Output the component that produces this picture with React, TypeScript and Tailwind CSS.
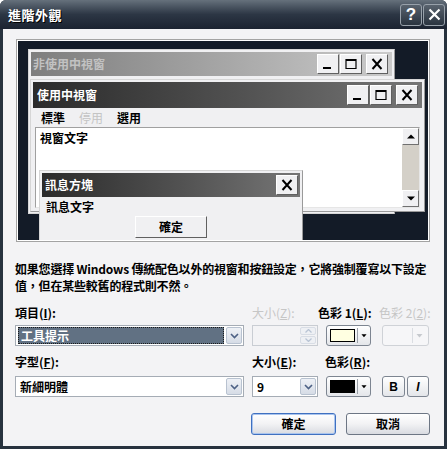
import React from "react";

const font = "font-['Noto_Sans_CJK_TC','Noto_Sans',sans-serif]";

// Classic caption buttons used by the preview windows
const CaptionButton = ({ kind }: { kind: "min" | "max" | "close" }) => (
  <div className="w-[22px] h-[20px] bg-[#f0f0f2] border border-t-white border-l-white border-b-[#606060] border-r-[#606060] flex items-center justify-center">
    <svg width="14" height="12" viewBox="0 0 14 12">
      {kind === "min" && <rect x="2" y="9" width="8" height="2" fill="#000" />}
      {kind === "max" && (
        <path d="M2 1.5h10v9H2z M2 1.5h10" fill="none" stroke="#000" strokeWidth="1.2" />
      )}
      {kind === "max" && <rect x="2" y="1" width="10" height="2" fill="#000" />}
      {kind === "close" && (
        <path d="M2.5 1 L11.5 11 M11.5 1 L2.5 11" stroke="#000" strokeWidth="2" />
      )}
    </svg>
  </div>
);

const DropArrow = () => (
  <div className="w-[16px] h-full bg-gradient-to-b from-[#eef1f6] to-[#d6dce6] border border-[#b8c2d0] rounded-[2px] flex items-center justify-center">
    <svg width="9" height="6" viewBox="0 0 9 6">
      <path d="M1 1 L4.5 4.5 L8 1" fill="none" stroke="#4d6185" strokeWidth="1.6" />
    </svg>
  </div>
);

const Combo = ({ text, selected, w }: { text: string; selected?: boolean; w: string }) => (
  <div className={`${w} h-[21px] border border-[#a5acb5] bg-white flex items-stretch p-[1px]`}>
    <div className="flex-1 flex items-center pl-[1px] pr-[2px]">
      <span
        className={`flex-1 h-full flex items-center px-[2px] text-[12px] font-semibold ${
          selected ? "bg-[#617183] text-white border border-dotted border-[#1a1a1a]" : "text-black"
        }`}
      >
        {text}
      </span>
    </div>
    <DropArrow />
  </div>
);

const ColorButton = ({ swatch }: { swatch: string }) => (
  <div className="w-[45px] h-[21px] rounded-[3px] border border-[#7d8591] bg-gradient-to-b from-white to-[#e4e6ea] flex items-center px-[3px] gap-[2px]">
    <div className={`w-[29px] h-[13px] border border-black ${swatch}`} />
    <div className="w-px h-[15px] bg-[#9aa0a8]" />
    <svg width="7" height="4" viewBox="0 0 7 4" className="ml-[1px]">
      <path d="M0.5 0 L6.5 0 L3.5 3.5 Z" fill="#000" />
    </svg>
  </div>
);

const XpButton = ({ label, w, def }: { label: string; w: string; def?: boolean }) => (
  <div
    className={`${w} h-[22px] rounded-[3px] border ${
      def ? "border-[#3f70c0] shadow-[inset_0_0_0_1px_#a9c4ee]" : "border-[#6d7684]"
    } bg-gradient-to-b from-white via-[#f2f2f4] to-[#d9dbe1] flex items-center justify-center text-[12px] font-bold text-black`}
  >
    {label}
  </div>
);

export default function App() {
  return (
    <div className={`${font} w-[447px] h-[449px] bg-[#27323e] rounded-t-[6px] flex flex-col overflow-hidden`}>
      {/* title bar */}
      <div className="h-[29px] shrink-0 bg-gradient-to-b from-[#66717c] via-[#2c3644] to-[#1b2331] flex items-center pl-[8px] pr-[2px]">
        <span className="text-white text-[13px] font-bold [text-shadow:1px_1px_0_#000] tracking-[0.5px]">進階外觀</span>
        <div className="ml-auto flex gap-[1px]">
          <div className="w-[22px] h-[22px] rounded-[3px] border border-[#98a1aa] bg-gradient-to-b from-[#59636e] to-[#2a3440] flex items-center justify-center text-white text-[17px] font-bold leading-none font-['Liberation_Sans',sans-serif]">
            ?
          </div>
          <div className="w-[22px] h-[22px] rounded-[3px] border border-[#98a1aa] bg-gradient-to-b from-[#59636e] to-[#2a3440] flex items-center justify-center">
            <svg width="13" height="13" viewBox="0 0 13 13">
              <path d="M1.5 1.5 L11.5 11.5 M11.5 1.5 L1.5 11.5" stroke="#fff" strokeWidth="2.2" />
            </svg>
          </div>
        </div>
      </div>

      {/* client area */}
      <div className="flex-1 mx-[3px] mb-[3px] bg-[#f3f3f5] flex flex-col">
        {/* preview */}
        <div className="mt-[10px] ml-[13px] w-[414px] h-[203px] border border-[#a3a3a3] p-px bg-white">
          <div className="relative w-full h-full bg-[#131b27] overflow-hidden">
            {/* inactive window */}
            <div className="absolute left-[10px] top-[8px] w-[367px] h-[165px] bg-[#f0f0f2] border border-[#d6d6d6] border-r-[#9a9a9a] p-[2px]">
              <div className="h-[24px] bg-gradient-to-r from-[#7e7e7e] to-[#cbcbcb] flex items-center pl-[2px] pr-[4px]">
                <span className="text-[12px] font-bold text-[#c2c2c2]">非使用中視窗</span>
                <div className="ml-auto flex gap-[1px]">
                  <CaptionButton kind="min" />
                  <CaptionButton kind="max" />
                  <div className="w-[2px]" />
                  <CaptionButton kind="close" />
                </div>
              </div>
            </div>

            {/* active window */}
            <div className="absolute left-[12px] top-[38px] w-[395px] h-[133px] bg-[#f0f0f2] border border-[#d6d6d6] border-r-[#9a9a9a] border-b-[#9a9a9a] p-[2px] flex flex-col">
              <div className="h-[26px] shrink-0 bg-gradient-to-r from-[#2b2b2b] to-[#767676] flex items-center pl-[4px] pr-[4px]">
                <span className="text-[12px] font-bold text-white">使用中視窗</span>
                <div className="ml-auto flex gap-[1px]">
                  <CaptionButton kind="min" />
                  <CaptionButton kind="max" />
                  <div className="w-[2px]" />
                  <CaptionButton kind="close" />
                </div>
              </div>
              <div className="h-[19px] shrink-0 flex items-center gap-[14px] pl-[8px] text-[12px] font-semibold">
                <span className="text-black">標準</span>
                <span className="text-[#c4c4c4] font-normal">停用</span>
                <span className="text-black">選用</span>
              </div>
              <div className="flex-1 mx-[2px] mb-[1px] bg-white border border-[#a0a0a0] border-r-[#e6e6e6] border-b-[#e6e6e6] flex">
                <div className="flex-1 pl-[4px] pt-[1px] text-[12px] font-bold text-black">視窗文字</div>
                <div className="w-[17px] flex flex-col">
                  <div className="h-[17px] bg-[#f0f0f2] border border-t-white border-l-white border-b-[#707070] border-r-[#707070] flex items-center justify-center">
                    <svg width="8" height="5" viewBox="0 0 8 5"><path d="M0 4.5 L8 4.5 L4 0.5 Z" fill="#000" /></svg>
                  </div>
                  <div className="flex-1 bg-[#d4d0c8]" />
                  <div className="h-[17px] bg-[#f0f0f2] border border-t-white border-l-white border-b-[#707070] border-r-[#707070] flex items-center justify-center">
                    <svg width="8" height="5" viewBox="0 0 8 5"><path d="M0 0.5 L8 0.5 L4 4.5 Z" fill="#000" /></svg>
                  </div>
                </div>
              </div>
            </div>

            {/* message box */}
            <div className="absolute left-[21px] top-[129px] w-[264px] h-[71px] bg-[#f0f0f2] border border-[#d6d6d6] border-r-[#9a9a9a] border-b-[#9a9a9a] p-[2px] flex flex-col">
              <div className="h-[24px] shrink-0 bg-gradient-to-r from-[#2b2b2b] to-[#767676] flex items-center pl-[3px] pr-[2px]">
                <span className="text-[12px] font-bold text-white">訊息方塊</span>
                <div className="ml-auto">
                  <CaptionButton kind="close" />
                </div>
              </div>
              <div className="pl-[4px] pt-[2px] text-[12px] font-semibold text-black leading-[16px]">訊息文字</div>
              <div className="ml-[93px] mt-[1px] w-[72px] h-[23px] bg-[#f0f0f2] border border-t-white border-l-white border-b-[#606060] border-r-[#606060] flex items-center justify-center text-[12px] font-semibold text-black">
                確定
              </div>
            </div>
          </div>
        </div>

        {/* description */}
        <p className="mt-[18px] ml-[12px] mr-[2px] text-[12px] leading-[17px] tracking-[-0.2px] text-black font-semibold">
          如果您選擇 Windows 傳統配色以外的視窗和按鈕設定，它將強制覆寫以下設定值，但在某些較舊的程式則不然。
        </p>

        {/* row 1 labels */}
        <div className="mt-[12px] ml-[12px] flex text-[12px] leading-[14px] font-bold">
          <span className="w-[237px]">
            項目(<span className="underline">I</span>):
          </span>
          <span className="w-[66px] text-[#c6c6c6] font-normal">
            大小(<span className="underline">Z</span>):
          </span>
          <span className="w-[61px]">
            色彩 1(<span className="underline">L</span>):
          </span>
          <span className="text-[#c6c6c6] font-normal">
            色彩 2(<span className="underline">2</span>):
          </span>
        </div>

        {/* row 1 controls */}
        <div className="mt-[5px] ml-[12px] flex items-center">
          <Combo text="工具提示" selected w="w-[229px]" />
          <div className="ml-[8px] w-[66px] h-[21px] border border-[#c9cdd3] bg-[#f3f3f5] flex justify-end p-[1px]">
            <div className="w-[16px] flex flex-col gap-px">
              <div className="flex-1 bg-[#eef0f4] border border-[#d8dde5] rounded-[2px] flex items-center justify-center">
                <svg width="7" height="4" viewBox="0 0 7 4"><path d="M0.5 3.5 L3.5 0.5 L6.5 3.5" fill="none" stroke="#b9c4d4" strokeWidth="1.3" /></svg>
              </div>
              <div className="flex-1 bg-[#eef0f4] border border-[#d8dde5] rounded-[2px] flex items-center justify-center">
                <svg width="7" height="4" viewBox="0 0 7 4"><path d="M0.5 0.5 L3.5 3.5 L6.5 0.5" fill="none" stroke="#b9c4d4" strokeWidth="1.3" /></svg>
              </div>
            </div>
          </div>
          <div className="ml-[8px]">
            <ColorButton swatch="bg-[#ffffe1]" />
          </div>
          <div className="ml-[11px] w-[47px] h-[21px] rounded-[3px] border border-[#cfd2d7] bg-[#f6f6f8] flex items-center justify-end pr-[5px]">
            <div className="w-px h-[15px] bg-[#dadde2] mr-[3px]" />
            <svg width="7" height="4" viewBox="0 0 7 4"><path d="M0.5 0 L6.5 0 L3.5 3.5 Z" fill="#c6c9ce" /></svg>
          </div>
        </div>

        {/* row 2 labels */}
        <div className="mt-[9px] ml-[12px] flex text-[12px] leading-[14px] font-bold">
          <span className="w-[237px]">
            字型(<span className="underline">F</span>):
          </span>
          <span className="w-[73px]">
            大小(<span className="underline">E</span>):
          </span>
          <span>
            色彩(<span className="underline">R</span>):
          </span>
        </div>

        {/* row 2 controls */}
        <div className="mt-[7px] ml-[12px] flex items-center">
          <Combo text="新細明體" w="w-[229px]" />
          <div className="ml-[8px]">
            <Combo text="9" w="w-[66px]" />
          </div>
          <div className="ml-[8px]">
            <ColorButton swatch="bg-black" />
          </div>
          <div className="ml-[11px] w-[23px] h-[21px] rounded-[3px] border border-[#7d8591] bg-gradient-to-b from-white to-[#e4e6ea] flex items-center justify-center text-[12px] font-bold font-['Liberation_Sans',sans-serif]">
            B
          </div>
          <div className="ml-[2px] w-[22px] h-[21px] rounded-[3px] border border-[#7d8591] bg-gradient-to-b from-white to-[#e4e6ea] flex items-center justify-center text-[12px] font-bold italic font-['Liberation_Sans',sans-serif]">
            I
          </div>
        </div>

        {/* dialog buttons */}
        <div className="mt-[16px] ml-[248px] flex gap-[10px]">
          <XpButton label="確定" w="w-[85px]" def />
          <XpButton label="取消" w="w-[84px]" />
        </div>
      </div>
    </div>
  );
}
